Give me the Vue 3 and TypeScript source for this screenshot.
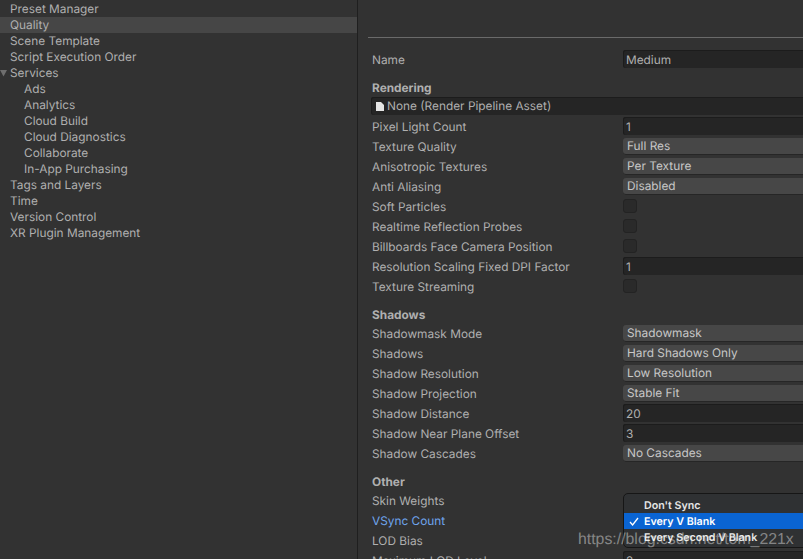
<script setup lang="ts">
type Row = { label: string; kind: 'text' | 'select' | 'check' | 'none'; value?: string; active?: boolean }

const nav: { label: string; indent?: boolean; selected?: boolean; open?: boolean }[] = [
  { label: 'Preset Manager' },
  { label: 'Quality', selected: true },
  { label: 'Scene Template' },
  { label: 'Script Execution Order' },
  { label: 'Services', open: true },
  { label: 'Ads', indent: true },
  { label: 'Analytics', indent: true },
  { label: 'Cloud Build', indent: true },
  { label: 'Cloud Diagnostics', indent: true },
  { label: 'Collaborate', indent: true },
  { label: 'In-App Purchasing', indent: true },
  { label: 'Tags and Layers' },
  { label: 'Time' },
  { label: 'Version Control' },
  { label: 'XR Plugin Management' },
]

const rendering: Row[] = [
  { label: 'Pixel Light Count', kind: 'text', value: '1' },
  { label: 'Texture Quality', kind: 'select', value: 'Full Res' },
  { label: 'Anisotropic Textures', kind: 'select', value: 'Per Texture' },
  { label: 'Anti Aliasing', kind: 'select', value: 'Disabled' },
  { label: 'Soft Particles', kind: 'check' },
  { label: 'Realtime Reflection Probes', kind: 'check' },
  { label: 'Billboards Face Camera Position', kind: 'check' },
  { label: 'Resolution Scaling Fixed DPI Factor', kind: 'text', value: '1' },
  { label: 'Texture Streaming', kind: 'check' },
]

const shadows: Row[] = [
  { label: 'Shadowmask Mode', kind: 'select', value: 'Shadowmask' },
  { label: 'Shadows', kind: 'select', value: 'Hard Shadows Only' },
  { label: 'Shadow Resolution', kind: 'select', value: 'Low Resolution' },
  { label: 'Shadow Projection', kind: 'select', value: 'Stable Fit' },
  { label: 'Shadow Distance', kind: 'text', value: '20' },
  { label: 'Shadow Near Plane Offset', kind: 'text', value: '3' },
  { label: 'Shadow Cascades', kind: 'select', value: 'No Cascades' },
]

const other: Row[] = [
  { label: 'Skin Weights', kind: 'none' },
  { label: 'VSync Count', kind: 'none', active: true },
  { label: 'LOD Bias', kind: 'none' },
  { label: 'Maximum LOD Level', kind: 'text', value: '2' },
]

const sections: { title: string; rows: Row[]; asset?: boolean }[] = [
  { title: 'Rendering', rows: rendering, asset: true },
  { title: 'Shadows', rows: shadows },
  { title: 'Other', rows: other },
]
</script>

<template>
  <div class="window">
    <aside class="sidebar">
      <div
        v-for="item in nav"
        :key="item.label"
        class="nav-item"
        :class="{ selected: item.selected, indent: item.indent }"
      >
        <svg v-if="item.open" class="caret" width="8" height="8" viewBox="0 0 8 8">
          <path d="M0 1H7L3.5 7.5Z" fill="#6e6e6e" />
        </svg>
        {{ item.label }}
      </div>
    </aside>

    <main class="panel">
      <div class="rule"></div>
      <div class="row name-row">
        <span class="label">Name</span>
        <div class="field text">Medium</div>
      </div>

      <section v-for="s in sections" :key="s.title" class="section">
        <h3 class="heading">{{ s.title }}</h3>
        <div v-if="s.asset" class="asset">
          <svg width="8" height="9" viewBox="0 0 8 9">
            <path d="M0 0H5L8 3V9H0Z" fill="#e4e4e4" />
          </svg>
          None (Render Pipeline Asset)
        </div>
        <div v-for="r in s.rows" :key="r.label" class="row">
          <span class="label" :class="{ active: r.active }">{{ r.label }}</span>
          <div v-if="r.kind === 'text'" class="field text">{{ r.value }}</div>
          <div v-else-if="r.kind === 'select'" class="field select">{{ r.value }}</div>
          <div v-else-if="r.kind === 'check'" class="check"></div>
        </div>
      </section>
    </main>

    <div class="menu">
      <div class="menu-item">Don't Sync</div>
      <div class="menu-item current">
        <svg class="tick" width="10" height="9" viewBox="0 0 10 9">
          <path d="M1 5L3.6 8L9 1" fill="none" stroke="#fff" stroke-width="1.3" />
        </svg>
        Every V Blank
      </div>
      <div class="menu-item">Every Second V Blank</div>
    </div>

    <div class="watermark">https://blog.csdn.net/tom_221x</div>
  </div>
</template>

<style>
html, body { margin: 0; background: #323232; overflow: hidden; }
</style>

<style scoped>
.window {
  position: relative;
  width: 803px;
  height: 559px;
  overflow: hidden;
  display: flex;
  background: #323232;
  color: #b0b0b0;
  font-family: Inter, "Liberation Sans", sans-serif;
  font-size: 11.85px;
  text-rendering: geometricPrecision;
}
.sidebar {
  width: 357px;
  flex: none;
  padding-top: 1px;
  border-right: 1px solid #1f1f1f;
}
.nav-item {
  position: relative;
  height: 16px;
  line-height: 16px;
  padding-left: 10px;
  white-space: nowrap;
}
.nav-item.indent { padding-left: 24px; }
.nav-item.selected { background: #464646; }
.caret { position: absolute; left: 0; top: 4px; }
.panel {
  flex: 1;
  min-width: 0;
  padding: 37px 0 0 10px;
}
.rule { height: 1px; background: #6a6a6a; }
.row {
  display: flex;
  align-items: flex-start;
  height: 20px;
  line-height: 20px;
  padding-left: 4px;
}
.name-row { margin-top: 12px; }
.label { width: 251px; flex: none; white-space: nowrap; }
.label.active { color: #6fa5ee; }
.field {
  flex: 1;
  border-radius: 3px 0 0 3px;
  box-sizing: border-box;
  white-space: nowrap;
}
.text {
  height: 18px;
  line-height: 20px;
  background: #252525;
  padding-left: 3px;
  box-shadow: inset 0 1px 0 #1c1c1c, inset 1px 0 0 #1c1c1c;
}
.select {
  height: 17px;
  margin-top: 1px;
  line-height: 16px;
  background: #474747;
  padding-left: 4px;
  color: #c8c8c8;
  box-shadow: inset 0 -1px 0 #262626;
}
.check {
  width: 14px;
  height: 14px;
  margin-top: 2px;
  box-sizing: border-box;
  border-radius: 3px;
  background: #2a2a2a;
  border: 1px solid #232323;
}
.section { margin-top: 9px; }
.heading {
  margin: 0;
  padding-left: 4px;
  height: 18px;
  line-height: 18px;
  font-size: 11.85px;
  font-weight: 700;
  color: #b0b0b0;
}
.asset {
  height: 18px;
  line-height: 18px;
  display: flex;
  align-items: center;
  gap: 3px;
  margin: 0 0 2px 3px;
  padding-left: 5px;
  background: #252525;
  border-radius: 3px 0 0 3px;
  box-shadow: inset 0 1px 0 #1c1c1c, inset 1px 0 0 #1c1c1c;
  white-space: nowrap;
}
.menu {
  position: absolute;
  left: 623px;
  top: 493px;
  width: 200px;
  height: 55px;
  box-sizing: border-box;
  padding-top: 3px;
  border-radius: 5px;
  background: #2f3133;
  border: 1px solid #161616;
  font-size: 10.7px;
  font-weight: 600;
  color: #e6e6e6;
}
.menu-item {
  position: relative;
  height: 16px;
  line-height: 18px;
  padding-left: 20px;
  white-space: nowrap;
}
.menu-item.current { background: #0a64d2; color: #fff; }
.tick { position: absolute; left: 5px; top: 4px; }
.watermark {
  position: absolute;
  left: 578px;
  top: 531px;
  font-family: "Liberation Sans", Arial, sans-serif;
  font-size: 15.85px;
  line-height: 18px;
  color: rgba(255, 255, 255, 0.42);
  white-space: nowrap;
}
</style>
